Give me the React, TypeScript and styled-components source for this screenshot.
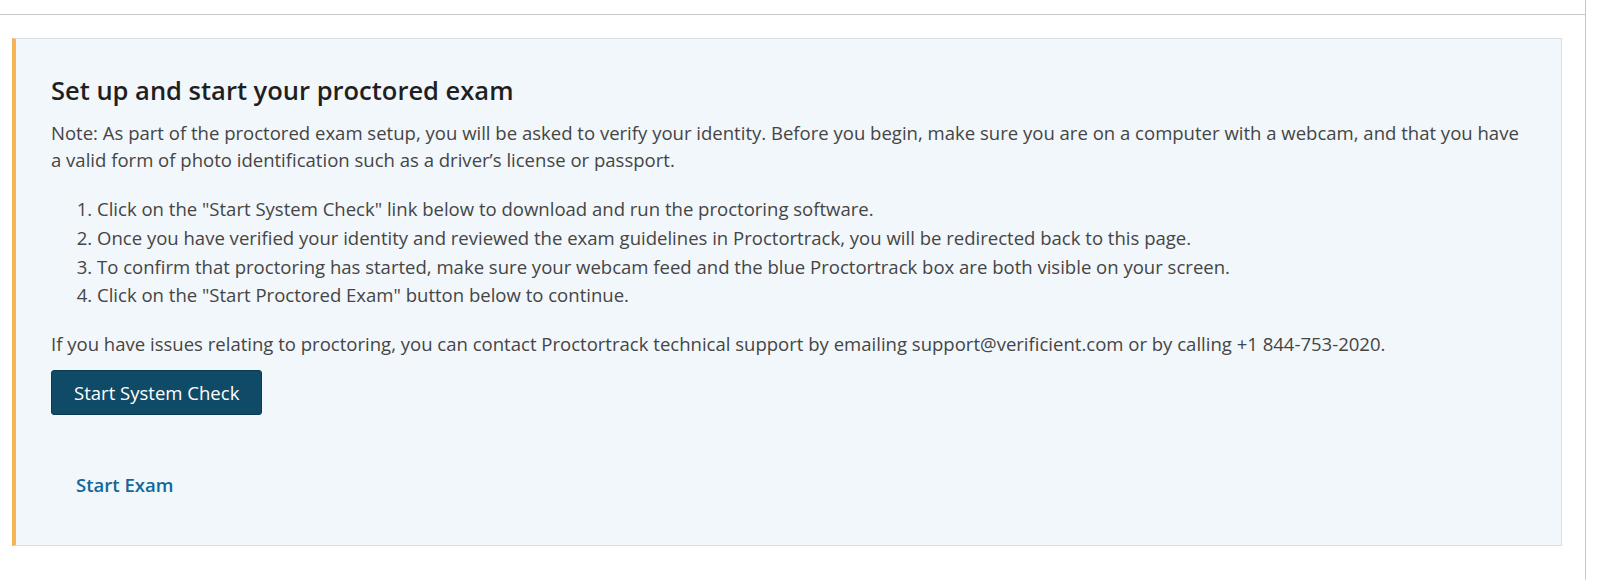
import styled, { createGlobalStyle } from "styled-components";

const GlobalStyle = createGlobalStyle`
  html, body {
    margin: 0;
    padding: 0;
    background: #ffffff;
  }
  body {
    font-family: "Open Sans", "Liberation Sans", sans-serif;
    color: #454545;
  }
`;

const Page = styled.div`
  width: 1586px;
  min-height: 580px;
  border-right: 1px solid #c8c8c8;
  box-sizing: border-box;
`;

const TopBar = styled.div`
  height: 14px;
  border-bottom: 1px solid #c8c8c8;
`;

const Content = styled.main`
  padding: 23px 23px 0 12px;
`;

const Panel = styled.section`
  background: #f2f7fb;
  border: 1px solid #dcdfe1;
  border-left: 4px solid #f6b356;
  padding: 36px 34px 47px 35px;
`;

const Heading = styled.h3`
  margin: 0 0 14px;
  font-size: 25.5px;
  line-height: 30px;
  font-weight: 600;
  color: #1f1f1f;
`;

const Text = styled.p`
  margin: 0;
  font-size: 18.55px;
  line-height: 27px;
`;

const Steps = styled.ol`
  margin: 22px 0 20px;
  padding-left: 46px;
  font-size: 18.55px;
  line-height: 28.8px;
`;

const PrimaryButton = styled.button`
  display: inline-block;
  margin-top: 13px;
  padding: 9px 22px;
  border: 1px solid #0a3b52;
  border-radius: 3px;
  background: #0f4a66;
  color: #ffffff;
  font-family: inherit;
  font-size: 18.55px;
  line-height: 25px;
  cursor: pointer;
`;

const LinkRow = styled.div`
  margin-top: 56px;
  padding-left: 25px;
`;

const ExamLink = styled.a`
  font-size: 18.55px;
  line-height: 27px;
  font-weight: 600;
  color: #11689a;
  text-decoration: none;
`;

export default function App() {
  return (
    <>
      <GlobalStyle />
      <Page>
        <TopBar />
        <Content>
          <Panel>
            <Heading>Set up and start your proctored exam</Heading>
            <Text>
              Note: As part of the proctored exam setup, you will be asked to verify your identity. Before you
              begin, make sure you are on a computer with a webcam, and that you have a valid form of photo
              identification such as a driver’s license or passport.
            </Text>
            <Steps>
              <li>Click on the "Start System Check" link below to download and run the proctoring software.</li>
              <li>
                Once you have verified your identity and reviewed the exam guidelines in Proctortrack, you will be
                redirected back to this page.
              </li>
              <li>
                To confirm that proctoring has started, make sure your webcam feed and the blue Proctortrack box are
                both visible on your screen.
              </li>
              <li>Click on the "Start Proctored Exam" button below to continue.</li>
            </Steps>
            <Text>
              If you have issues relating to proctoring, you can contact Proctortrack technical support by emailing
              support@verificient.com or by calling +1 844-753-2020.
            </Text>
            <PrimaryButton>Start System Check</PrimaryButton>
            <LinkRow>
              <ExamLink href="#">Start Exam</ExamLink>
            </LinkRow>
          </Panel>
        </Content>
      </Page>
    </>
  );
}
